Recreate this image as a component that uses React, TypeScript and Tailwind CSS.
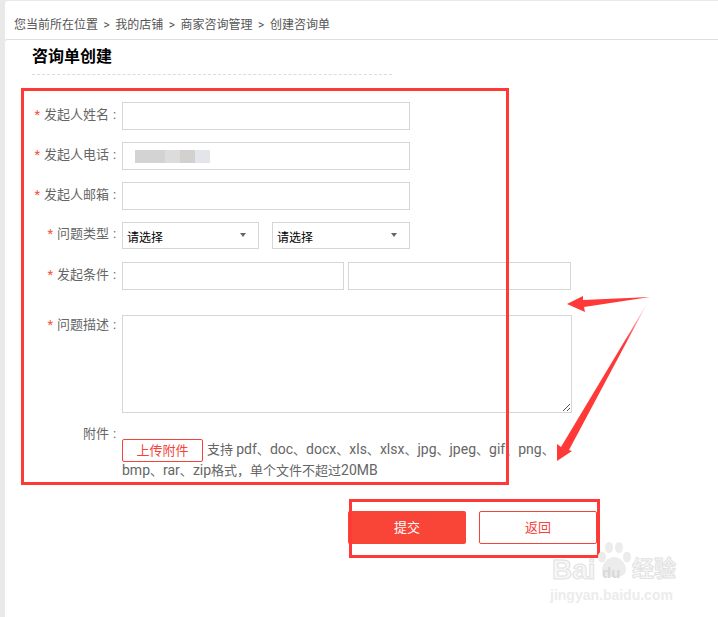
import React from "react";

const font = { fontFamily: '"Roboto", "Noto Sans CJK SC", sans-serif' };

function Label({ text, req = true, h }: { text: string; req?: boolean; h: string }) {
  return (
    <div className={`w-[117px] shrink-0 text-right text-[13px] leading-[20px] text-[#666] ${h}`}>
      {req && <span className="mr-[4px] text-[#f5543a]">*</span>}
      {text}
      <span className="ml-[4px] mr-[3px] inline-block w-[6px] text-left">:</span>
    </div>
  );
}

function Box({ w, children }: { w: string; children?: React.ReactNode }) {
  return <div className={`relative h-[28px] border border-[#d6d6d6] bg-white ${w}`}>{children}</div>;
}

function Select({ w }: { w: string }) {
  return (
    <div className={`flex h-[27px] items-center justify-between border border-[#d6d6d6] bg-white pl-[4px] pr-[12px] text-[12px] text-black ${w}`}>
      <span className="pt-[4px]">请选择</span>
      <span className="mb-[2px] h-0 w-0 border-x-[3.5px] border-t-[4px] border-x-transparent border-t-[#666]" />
    </div>
  );
}

function Latin({ children }: { children: React.ReactNode }) {
  return <span className="text-[14px]">{children}</span>;
}

export default function App() {
  return (
    <div className="relative h-[617px] w-[718px] overflow-hidden bg-[#e9e9e9] pl-[5px] pt-[1px]" style={font}>
      <div className="flex h-[38px] items-end rounded-tl-[3px] bg-white pb-[6px] pl-[9px] text-[12px] leading-[16px] text-[#555]">
        <span>您当前所在位置</span>
        <span className="mx-[5.5px]">&gt;</span>
        <span>我的店铺</span>
        <span className="mx-[5.5px]">&gt;</span>
        <span>商家咨询管理</span>
        <span className="mx-[5.5px]">&gt;</span>
        <span>创建咨询单</span>
      </div>
      <div className="h-[578px] rounded-tl-[3px] border-t border-[#dedede] bg-white">
        <div className="ml-[27px] w-[360px] border-b border-dashed border-[#dcdcdc] pb-[3px] pt-[3px] text-[16px] font-bold leading-[28px] text-black">
          咨询单创建
        </div>

        <div className="flex flex-col pt-[27px]">
          <div className="mb-[12px] flex">
            <Label text="发起人姓名" h="pt-[3px]" />
            <Box w="w-[288px]" />
          </div>
          <div className="mb-[12px] flex">
            <Label text="发起人电话" h="pt-[3px]" />
            <Box w="w-[288px]">
              <div className="ml-[12px] mt-[7px] flex h-[13px] blur-[0.5px]">
                <div className="w-[30px] bg-[#d4d3d3]" />
                <div className="w-[15px] bg-[#dcdcdc]" />
                <div className="w-[15px] bg-[#d2d1ce]" />
                <div className="w-[15px] bg-[#e4e5ea]" />
              </div>
            </Box>
          </div>
          <div className="mb-[12px] flex">
            <Label text="发起人邮箱" h="pt-[3px]" />
            <Box w="w-[288px]" />
          </div>
          <div className="mb-[13px] flex">
            <Label text="问题类型" h="pt-[2px]" />
            <Select w="w-[137px]" />
            <div className="w-[13px]" />
            <Select w="w-[138px]" />
          </div>
          <div className="mb-[25px] flex">
            <Label text="发起条件" h="pt-[3px]" />
            <Box w="w-[222px]" />
            <div className="w-[4px]" />
            <Box w="w-[223px]" />
          </div>
          <div className="mb-[10px] flex">
            <Label text="问题描述" h="" />
            <div className="relative h-[98px] w-[450px] border border-[#d6d6d6] bg-white">
              <svg className="absolute bottom-0 right-0" width="9" height="9" viewBox="0 0 9 9">
                <path d="M1 8 8 1M5 8 8 5" stroke="#555" strokeWidth="1" fill="none" />
              </svg>
            </div>
          </div>
          <div className="flex">
            <Label text="附件" req={false} h="pt-[1px]" />
            <div className="mt-[16px] w-[440px] text-[13px] leading-[21px] text-[#666]">
              <span className="mb-[-2px] mr-[4px] inline-block h-[23px] w-[81px] rounded-[2px] border border-[#f5433a] text-center align-top text-[13px] leading-[21px] text-[#f5433a]">
                上传附件
              </span>
              支持 <Latin>pdf</Latin>、<Latin>doc</Latin>、<Latin>docx</Latin>、<Latin>xls</Latin>、<Latin>xlsx</Latin>、<Latin>jpg</Latin>、<Latin>jpeg</Latin>、<Latin>gif</Latin>、<Latin>png</Latin>、<Latin>bmp</Latin>、<Latin>rar</Latin>、<Latin>zip</Latin>格式，单个文件不超过<Latin>20MB</Latin>
            </div>
          </div>
          <div className="ml-[343px] mt-[30px] flex gap-[13px] text-[13px]">
            <button className="h-[33px] w-[118px] rounded-[2px] bg-[#f94438] text-white">提交</button>
            <button className="h-[33px] w-[118px] rounded-[2px] border border-[#f5433a] bg-white text-[#f5433a]">返回</button>
          </div>
        </div>
      </div>

      {/* annotations */}
      <div className="absolute left-[21px] top-[88px] h-[397px] w-[488px] border-[3px] border-[#ff3838]" />
      <div className="absolute left-[349px] top-[499px] h-[59px] w-[251px] border-[3px] border-[#ff3838]" />
      <svg className="absolute left-0 top-0" width="718" height="617" viewBox="0 0 718 617">
        <defs>
          <linearGradient id="fade" x1="648" y1="302" x2="557" y2="461" gradientUnits="userSpaceOnUse">
            <stop offset="0" stopColor="#ff3838" stopOpacity="0.1" />
            <stop offset="0.25" stopColor="#ff3838" />
          </linearGradient>
        </defs>
        <path d="M650 297 L583 300 L583 296 L567 304 L585 312 L584 307 Z" fill="#ff3838" />
        <path d="M648 302 L561 447 L557 444 L557 461 L572 451 L569 450 Z" fill="url(#fade)" />
      </svg>
      <div className="absolute left-[552px] top-[540px] select-none">
        <svg className="absolute left-[45px] top-[2px]" width="35" height="35" viewBox="0 0 35 35" fill="#ececec">
          <ellipse cx="5" cy="15" rx="4" ry="5.5" />
          <ellipse cx="12" cy="5.5" rx="4" ry="5.5" />
          <ellipse cx="22" cy="5.5" rx="4" ry="5.5" />
          <ellipse cx="30" cy="15" rx="4" ry="5.5" />
          <path d="M17 15c6 0 12 6 12 13 0 5-5 7-12 7S5 33 5 28c0-7 6-13 12-13z" />
        </svg>
        <div
          className="absolute left-0 top-[16px] whitespace-nowrap text-[28px] font-bold leading-[28px] text-[#f7f7f7] [-webkit-text-stroke:1px_#e2e2e2]"
          style={{ fontFamily: '"Liberation Sans", sans-serif' }}
        >
          Bai
        </div>
        <div
          className="absolute left-[50px] top-[25px] whitespace-nowrap text-[15px] font-bold leading-[16px] text-[#d9d9d9]"
          style={{ fontFamily: '"Liberation Sans", sans-serif' }}
        >
          du
        </div>
        <div className="absolute left-[80px] top-[18px] whitespace-nowrap text-[22px] font-bold leading-[22px] text-[#f7f7f7] [-webkit-text-stroke:1px_#e2e2e2]">
          经验
        </div>
        <div
          className="absolute left-[-2px] top-[47px] whitespace-nowrap text-[14px] font-bold leading-[16px] text-[#ececec]"
          style={{ fontFamily: '"Liberation Sans", sans-serif' }}
        >
          jingyan.baidu.com
        </div>
      </div>
    </div>
  );
}
